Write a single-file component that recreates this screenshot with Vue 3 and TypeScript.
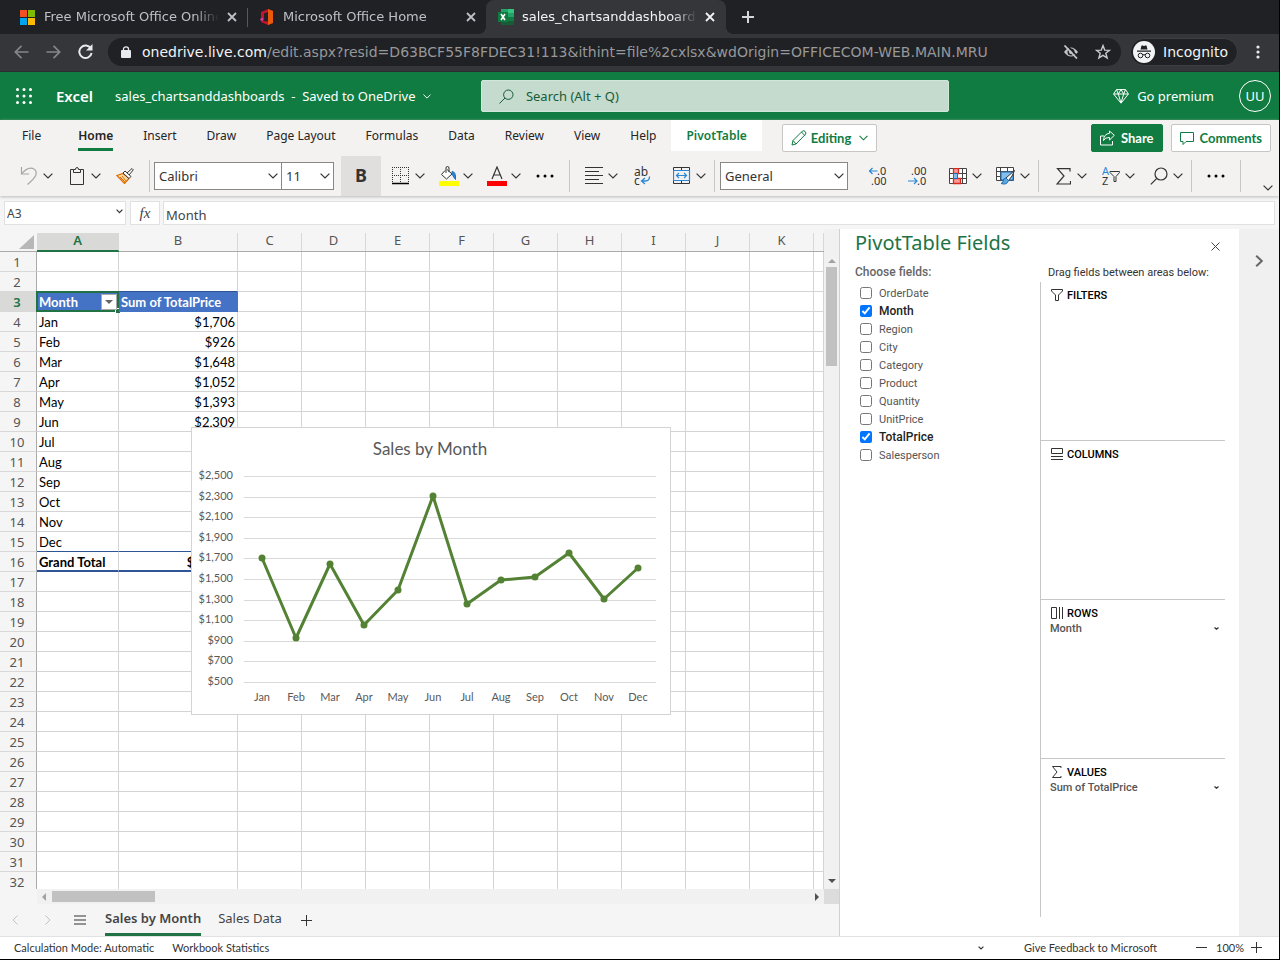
<script setup lang="ts">
import { computed, ref } from 'vue'

interface Field { name: string; on: boolean }
interface Area { id: string; title: string; item?: string }

const ribbonTabs: string[] = ['File', 'Home', 'Insert', 'Draw', 'Page Layout', 'Formulas', 'Data', 'Review', 'View', 'Help', 'PivotTable']
const cols: string[] = ['A', 'B', 'C', 'D', 'E', 'F', 'G', 'H', 'I', 'J', 'K', '']
const emptyCols = cols.slice(2)
const months = ['Jan', 'Feb', 'Mar', 'Apr', 'May', 'Jun', 'Jul', 'Aug', 'Sep', 'Oct', 'Nov', 'Dec']
const sales = [1706, 926, 1648, 1052, 1393, 2309, 1255, 1490, 1520, 1750, 1305, 1605]
const ticks = [2500, 2300, 2100, 1900, 1700, 1500, 1300, 1100, 900, 700, 500]

const money = (n: number): string => '$' + n.toLocaleString('en-US')

const rows = Array.from({ length: 32 }, (_, i) => {
  const n = i + 1
  if (n === 3) return { n, a: 'Month', b: 'Sum of TotalPrice' }
  if (n >= 4 && n <= 15) return { n, a: months[n - 4], b: n <= 9 ? money(sales[n - 4]) : '' }
  if (n === 16) return { n, a: 'Grand Total', b: '$17,959' }
  return { n, a: '', b: '' }
})

const fields = ref<Field[]>([
  { name: 'OrderDate', on: false },
  { name: 'Month', on: true },
  { name: 'Region', on: false },
  { name: 'City', on: false },
  { name: 'Category', on: false },
  { name: 'Product', on: false },
  { name: 'Quantity', on: false },
  { name: 'UnitPrice', on: false },
  { name: 'TotalPrice', on: true },
  { name: 'Salesperson', on: false },
])

const areas: Area[] = [
  { id: 'filters', title: 'FILTERS' },
  { id: 'columns', title: 'COLUMNS' },
  { id: 'rows', title: 'ROWS', item: 'Month' },
  { id: 'values', title: 'VALUES', item: 'Sum of TotalPrice' },
]

const search = ref('')
const formula = ref('Month')
const cellName = ref('A3')

const yOf = (v: number): number => Math.round(254 - ((v - 500) / 2000) * 206)
const xOf = (i: number): number => Math.round(69.500 + i * 34.2)
const line = computed(() => sales.map((v, i) => `${xOf(i)},${yOf(v)}`).join(' '))
</script>

<template>
  <div class="window">
    <svg class="defs" aria-hidden="true">
      <symbol id="chev" viewBox="0 0 10 6"><path d="M.6.6 5 5 9.400.6" fill="none" stroke="currentColor" stroke-width="1.2" /></symbol>
      <symbol id="close" viewBox="0 0 10 10"><path d="M1 1l8 8M9 1l-8 8" fill="none" stroke="currentColor" stroke-width="1.8" /></symbol>
      <symbol id="dots" viewBox="0 0 18 4"><circle cx="2" cy="2" r="1.5" /><circle cx="9" cy="2" r="1.5" /><circle cx="16" cy="2" r="1.5" /></symbol>
    </svg>

    <header class="browser">
      <nav class="btabs">
        <div class="btab first">
          <svg width="15" height="15" viewBox="0 0 15 15"><path fill="#f25022" d="M0 0h7v7H0z" /><path fill="#7fba00" d="M8 0h7v7H8z" /><path fill="#00a4ef" d="M0 8h7v7H0z" /><path fill="#ffb900" d="M8 8h7v7H8z" /></svg>
          <span class="btitle">Free Microsoft Office Online</span>
          <button class="bx" aria-label="Close tab"><svg width="10" height="10"><use href="#close" /></svg></button>
        </div>
        <div class="btab second">
          <svg width="14" height="16" viewBox="0 0 14 16"><path fill="#c4122f" d="M8 0 1 3v10l7 3 5-2V2z" /><path fill="#d83ba0" d="M1 9 0 11l3 1V9z" /><path fill="#e8590c" d="M8 0v16l5-2V2z" /><path fill="#202124" d="M4 4.500 8 3v9.500L3 12l1-1z" /></svg>
          <span class="btitle">Microsoft Office Home</span>
          <button class="bx" aria-label="Close tab"><svg width="10" height="10"><use href="#close" /></svg></button>
        </div>
        <div class="btab third">
          <svg width="16" height="16" viewBox="0 0 16 16"><path fill="#21a366" d="M3 0h7v4H3z" /><path fill="#33c481" d="M10 0h6v4h-6z" /><path fill="#107c41" d="M3 4h7v4H3z" /><path fill="#21a366" d="M10 4h6v4h-6z" /><path fill="#185c37" d="M3 8h13v8H3z" /><path fill="#107c41" d="M10 8h6v4h-6z" /><path fill="#0f7a40" d="M0 3h10v10H0z" /><path d="M3 5l4 6M7 5l-4 6" stroke="#fff" stroke-width="1.600" /></svg>
          <span class="btitle">sales_chartsanddashboards</span>
          <button class="bx" aria-label="Close tab"><svg width="10" height="10"><use href="#close" /></svg></button>
        </div>
        <button class="newtab" aria-label="New tab"><svg width="12" height="12" viewBox="0 0 12 12"><path d="M6 0v12M0 6h12" stroke="#d5d6d8" stroke-width="2" /></svg></button>
      </nav>
      <div class="bbar">
        <button class="bnav dim" aria-label="Back"><svg width="15" height="14" viewBox="0 0 15 14"><path d="M14.500 7H1.500M7.500.800 1.300 7l6.200 6.200" fill="none" stroke="currentColor" stroke-width="1.700" /></svg></button>
        <button class="bnav dim" aria-label="Forward"><svg width="15" height="14" viewBox="0 0 15 14"><path d="M.500 7h13M7.500.800 13.700 7l-6.200 6.200" fill="none" stroke="currentColor" stroke-width="1.700" /></svg></button>
        <button class="bnav" aria-label="Reload"><svg width="15" height="15" viewBox="0 0 15 15"><path d="M12.800 4.500A6.200 6.200 0 1 0 13.600 9" fill="none" stroke="currentColor" stroke-width="2" /><path d="M14.500 0v6.500H8z" fill="currentColor" /></svg></button>
        <div class="address">
          <svg width="10" height="12" viewBox="0 0 10 12"><path fill="#e8eaed" d="M1 4h8q1 0 1 1v6q0 1-1 1H1q-1 0-1-1V5q0-1 1-1z" /><path d="M2.500 5V3a2.500 2.200 0 0 1 5 0v2" fill="none" stroke="#e8eaed" stroke-width="1.300" /></svg>
          <span class="url"><b>onedrive.live.com</b>/edit.aspx?resid=D63BCF55F8FDEC31!113&amp;ithint=file%2cxlsx&amp;wdOrigin=OFFICECOM-WEB.MAIN.MRU</span>
          <svg width="16" height="14" viewBox="0 0 16 14"><path d="M1 7q7-9 14 0-7 9-14 0z" fill="#c4c5c8" /><circle cx="8" cy="7" r="3.500" fill="#202124" /><circle cx="8" cy="7" r="2" fill="#c4c5c8" /><path d="M3.500 0l12 12.500" stroke="#202124" stroke-width="1.800" /><path d="M1.500.500l12.500 13" stroke="#c4c5c8" stroke-width="1.800" /></svg>
          <svg class="star" width="16" height="16" viewBox="0 0 16 16"><path d="M8 1.600l1.700 4.500 4.800.2-3.700 3 1.300 4.600L8 11.300l-4.100 2.600 1.300-4.600-3.700-3 4.800-.2z" fill="none" stroke="#c9cacc" stroke-width="1.400" /></svg>
        </div>
        <div class="incog">
          <svg width="22" height="22" viewBox="0 0 22 22"><circle cx="11" cy="11" r="11" fill="#f1f3f4" /><path d="M7.500 8.500 8.500 4.500h1.200q1.300.8 2.600 0h1.200l1 4zM4 9.500h14v1.300H4z" fill="#202124" /><circle cx="7.500" cy="14.500" r="2.300" fill="none" stroke="#202124" /><circle cx="14.500" cy="14.500" r="2.300" fill="none" stroke="#202124" /><path d="M9.800 14q1.200-.8 2.400 0" stroke="#202124" fill="none" /></svg>
          <span>Incognito</span>
        </div>
        <button class="kebab" aria-label="Menu"><svg width="4" height="14" viewBox="0 0 4 14" fill="#e8eaed"><circle cx="2" cy="2" r="1.600" /><circle cx="2" cy="7" r="1.600" /><circle cx="2" cy="12" r="1.600" /></svg></button>
      </div>
    </header>

    <div class="suite">
      <button class="waffle" aria-label="App launcher">
        <svg width="16" height="16" viewBox="0 0 16 16" fill="#fff"><template v-for="r in 3" :key="r"><circle v-for="c in 3" :key="c" :cx="c * 6.500 - 5" :cy="r * 6.500 - 5" r="1.500" /></template></svg>
      </button>
      <strong class="brand">Excel</strong>
      <button class="docname">sales_chartsanddashboards&nbsp; - &nbsp;Saved to OneDrive <svg width="8" height="5"><use href="#chev" /></svg></button>
      <label class="search">
        <svg width="15" height="15" viewBox="0 0 15 15"><circle cx="9.300" cy="5.700" r="4.700" fill="none" stroke="#185c37" /><path d="M6 9 .500 14.500" stroke="#185c37" /></svg>
        <input v-model="search" type="text" placeholder="Search (Alt + Q)" aria-label="Search" />
      </label>
      <button class="premium">
        <svg width="16" height="15" viewBox="0 0 16 15" fill="none" stroke="#fff"><path d="M3.500.600h9L15.400 5 8 14.200.600 5zM.600 5h14.800M5.300 5 8 14l2.700-9M3.500.600 5.300 5 8 .600 10.700 5l1.800-4.400" /></svg>
        Go premium
      </button>
      <button class="avatar" aria-label="Account">UU</button>
    </div>

    <section class="ribbon">
      <div class="rtabs">
        <button v-for="t in ribbonTabs" :key="t" class="rtab" :class="[t === 'Home' && 'on', t === 'PivotTable' && 'ctx', t === 'File' && 'file']"><span>{{ t }}</span></button>
        <button class="rbtn editing">
          <svg width="16" height="16" viewBox="0 0 16 16" fill="none" stroke="currentColor"><path d="M1 15l1-4.500L11.500 1q1.500-.8 2.700.6t.3 2.700L5 14zM2 10.500 5 14M10.500 2l3.300 3.500" /></svg>
          Editing
          <svg class="tail" width="9" height="6"><use href="#chev" /></svg>
        </button>
        <button class="rbtn share">
          <svg width="15" height="16" viewBox="0 0 15 16" fill="none" stroke="currentColor"><path d="M4 6H.500v9h12v-4M9.500 1l4.800 4.300L9.500 10V7.500Q5 7.200 3.500 10.500 4 3.800 9.500 3.300z" /></svg>
          Share
        </button>
        <button class="rbtn comments">
          <svg width="14" height="13" viewBox="0 0 14 13" fill="none" stroke="currentColor"><path d="M.500.500h13v9H6L3 12.500v-3H.500z" /></svg>
          Comments
        </button>
      </div>

      <div class="tools">
        <button class="split pale" aria-label="Undo">
          <span class="ic"><svg width="18" height="18" viewBox="0 0 18 18" fill="none" stroke="#a8a6a4" stroke-width="1.200"><path d="M1.500 0v7H9M1.500 7Q7 0 12.500 1.300q5 2 3.200 7.200Q14 12 7.500 17.500" /></svg></span><svg class="cv"><use href="#chev" /></svg>
        </button>
        <button class="split" aria-label="Paste">
          <span class="ic"><svg width="14" height="18" viewBox="0 0 14 18" fill="none" stroke="#333"><path d="M3.500 2.500H.500v15h13v-15h-3" /><path d="M3.500 2.500h2Q5.500.500 7 .500t1.500 2h2v3h-7z" /></svg></span><svg class="cv"><use href="#chev" /></svg>
        </button>
        <button class="solo" aria-label="Format painter">
          <svg width="18" height="16" viewBox="0 0 18 16"><path d="M.800 7.500 7 5.500l6 5-4.500 5z" fill="#fbd9a5" stroke="#e06c00" stroke-width="1.200" /><path d="M4 9l5 5M6 8l4 5" stroke="#e06c00" /><path d="M7 5l2-2 6 5.500-2 2zM11 5l5-4.500 1.300 1.300L13 7" fill="#fff" stroke="#333" /></svg>
        </button>
        <i class="sep"></i>
        <label class="combo font"><select aria-label="Font"><option>Calibri</option></select><svg class="cv"><use href="#chev" /></svg></label>
        <label class="combo size"><select aria-label="Font size"><option>11</option></select><svg class="cv"><use href="#chev" /></svg></label>
        <button class="bold" aria-label="Bold">B</button>
        <button class="split" aria-label="Borders">
          <span class="ic"><svg width="18" height="18" viewBox="0 0 18 18" stroke="#333"><path d="M.500 0v16M16.500 0v16M8.500 0v16M0 .500h17M0 8.500h17" stroke-dasharray="1 1" /><path d="M0 16.500h17" stroke="#000" stroke-width="1.500" /></svg></span><svg class="cv"><use href="#chev" /></svg>
        </button>
        <button class="split" aria-label="Fill color">
          <span class="ic"><svg width="20" height="20" viewBox="0 0 20 20"><path d="M6 4.500 2.500 8.500l5 4.500L13 8 8 3.500" fill="#fff" stroke="#333" /><path d="M7 7V2q0-1.500 1.500-1.500T10 2v4" fill="none" stroke="#333" /><path d="M13 5.500q4 0 3.500 8Q15 12 13 8z" fill="#2b88d8" stroke="#1f6fb8" /><path fill="#ff0" d="M0 15h20v5H0z" /></svg></span><svg class="cv"><use href="#chev" /></svg>
        </button>
        <button class="split" aria-label="Font color">
          <span class="ic"><svg width="20" height="20" viewBox="0 0 20 20"><path d="M5 13 10 1l5 12M7 9h6.500" fill="none" stroke="#333" stroke-width="1.200" /><path fill="#f00" d="M0 15h20v5H0z" /></svg></span><svg class="cv"><use href="#chev" /></svg>
        </button>
        <button class="solo" aria-label="More font options"><svg width="18" height="4"><use href="#dots" /></svg></button>
        <i class="sep"></i>
        <button class="split" aria-label="Alignment">
          <span class="ic"><svg width="18" height="18" viewBox="0 0 18 18" stroke="#333"><path d="M0 .500h18M0 4.500h14M0 8.500h18M0 12.500h14M0 16.500h18" /></svg></span><svg class="cv"><use href="#chev" /></svg>
        </button>
        <button class="solo wrap" aria-label="Wrap text">
          <svg width="18" height="24" viewBox="0 0 18 24"><text x="1" y="12" font-size="12" fill="#333">ab</text><text x="1" y="21" font-size="12" fill="#333">c</text><path d="M16.500 12.500q0 4.500-4 4.500H9M12 14l-3.500 3 3.500 3" fill="none" stroke="#2b88d8" stroke-width="1.300" /></svg>
        </button>
        <button class="split" aria-label="Merge">
          <span class="ic"><svg width="18" height="18" viewBox="0 0 18 18" fill="none"><path d="M.500 4V.500h16V4M.500 13v3.500h16V13M8.500.500V4M8.500 13v3.500" stroke="#333" /><path d="M.500 3.500h16v10H.500z" stroke="#2b88d8" stroke-width="1.200" /><path d="M3.500 8.500h10M6 6 3.500 8.500 6 11M11 6l2.500 2.500L11 11" stroke="#2b88d8" stroke-width="1.200" /></svg></span><svg class="cv"><use href="#chev" /></svg>
        </button>
        <i class="sep"></i>
        <label class="combo number"><select aria-label="Number format"><option>General</option></select><svg class="cv"><use href="#chev" /></svg></label>
        <button class="solo dec" aria-label="Increase decimal">
          <svg width="20" height="24" viewBox="0 0 20 24"><text x="9" y="11" font-size="11" fill="#333">.0</text><text x="3" y="21" font-size="11" fill="#333">.00</text><path d="M9.500 7H1.500M4.500 4l-3 3 3 3" fill="none" stroke="#2b88d8" stroke-width="1.200" /></svg>
        </button>
        <button class="solo" aria-label="Decrease decimal">
          <svg width="20" height="24" viewBox="0 0 20 24"><text x="3" y="11" font-size="11" fill="#333">.00</text><text x="9" y="21" font-size="11" fill="#333">.0</text><path d="M0 17h9M6 14l3 3-3 3" fill="none" stroke="#2b88d8" stroke-width="1.200" /></svg>
        </button>
        <button class="split" aria-label="Conditional formatting">
          <span class="ic"><svg width="18" height="17" viewBox="0 0 18 17"><path d="M.500.500h17v15H.500zM13.500 0v16M0 5.500h18M0 10.500h18M4.500 0v16" fill="#fff" stroke="#444" /><path d="M4.500.500h5v5h-5zM4.500 10.500h7v5h-7z" fill="#ff9a9a" stroke="#d62b20" stroke-width="1.300" /><path d="M4.500 5.500h4v5h-4z" fill="#83beec" stroke="#1f6fb8" /></svg></span><svg class="cv"><use href="#chev" /></svg>
        </button>
        <button class="split" aria-label="Format as table">
          <span class="ic"><svg width="20" height="18" viewBox="0 0 20 18"><path d="M.500.500h17v13H.500zM0 4.500h18M4.500 0v14M0 9.500h5M11.500 0v4" fill="#fff" stroke="#444" /><path d="M5 5h12v8H5z" fill="#83beec" stroke="#1f6fb8" /><path d="M18.500 3.500 10 11l2.500 2.500q4-4 6-10z" fill="#fff" stroke="#333" /><path d="M10 11q-3 0-3 4l-2 1.500q6 2 7.500-3z" fill="#5ba8e0" stroke="#1f6fb8" /></svg></span><svg class="cv"><use href="#chev" /></svg>
        </button>
        <i class="sep"></i>
        <button class="split" aria-label="AutoSum">
          <span class="ic"><svg width="15" height="17" viewBox="0 0 15 17"><path d="M14 3.500V.600H1.500L8 8l-7 8h13.500v-3" fill="none" stroke="#333" stroke-width="1.200" /></svg></span><svg class="cv"><use href="#chev" /></svg>
        </button>
        <button class="split" aria-label="Sort and filter">
          <span class="ic"><svg width="18" height="24" viewBox="0 0 18 24"><text x="0" y="11" font-size="11" fill="#2b88d8">A</text><text x="0" y="21" font-size="11" fill="#333">Z</text><path d="M8 7.500h9.500v1L14 12.500v5h-2v-5L8 8.500z" fill="none" stroke="#333" /></svg></span><svg class="cv"><use href="#chev" /></svg>
        </button>
        <button class="split" aria-label="Find">
          <span class="ic"><svg width="18" height="18" viewBox="0 0 18 18"><circle cx="11" cy="7" r="6" fill="none" stroke="#333" stroke-width="1.200" /><path d="M6.800 11.300.800 17.300" stroke="#333" stroke-width="1.200" /></svg></span><svg class="cv"><use href="#chev" /></svg>
        </button>
        <i class="sep"></i>
        <button class="solo" aria-label="More"><svg width="18" height="4"><use href="#dots" /></svg></button>
        <i class="sep"></i>
        <button class="collapse" aria-label="Collapse ribbon"><svg class="cv"><use href="#chev" /></svg></button>
      </div>
    </section>

    <div class="fbar">
      <label class="namebox"><input v-model="cellName" type="text" aria-label="Name box" /><svg width="7" height="5" viewBox="0 0 7 5"><path d="M.600.600 3.500 3.600 6.400.600" fill="none" stroke="#333" stroke-width="1.200" /></svg></label>
      <button class="fx" aria-label="Insert function">fx</button>
      <input v-model="formula" class="formula" type="text" aria-label="Formula bar" />
    </div>

    <main class="work">
      <section class="book">
        <div class="sheetrow">
          <div class="sheet">
            <table>
              <colgroup><col class="c-row" /><col class="c-a" /><col class="c-b" /><col v-for="i in 9" :key="i" class="c-n" /><col /></colgroup>
              <thead>
                <tr>
                  <td class="corner"><svg width="15" height="14" viewBox="0 0 15 14"><path d="M15 0v14H0z" fill="#b7b7b7" /></svg></td>
                  <th v-for="(c, i) in cols" :key="i" scope="col" :class="{ sel: c === 'A' }"><span>{{ c }}</span></th>
                </tr>
              </thead>
              <tbody>
                <tr v-for="r in rows" :key="r.n" :class="'r' + r.n">
                  <th scope="row">{{ r.n }}</th>
                  <td>{{ r.a }}<template v-if="r.n === 3"><i class="cursor"></i><button class="drop" aria-label="Filter Month"><svg width="8" height="4" viewBox="0 0 8 4"><path d="M0 0h8L4 4z" fill="#666" /></svg></button></template></td>
                  <td class="num">{{ r.b }}</td>
                  <td v-for="(c, i) in emptyCols" :key="i"></td>
                </tr>
              </tbody>
            </table>
            <figure class="chart">
              <svg viewBox="0 0 478 286" width="478" height="286" role="img" aria-label="Sales by Month">
                <text class="ctitle" x="238" y="27">Sales by Month</text>
                <g v-for="t in ticks" :key="t">
                  <path :d="`M52 ${yOf(t)}.5H464`" stroke="#d9d9d9" />
                  <text class="ytick" x="41" :y="yOf(t) + 3">{{ money(t) }}</text>
                </g>
                <text v-for="(m, i) in months" :key="m" class="xtick" :x="xOf(i)" y="273">{{ m }}</text>
                <polyline :points="line" fill="none" stroke="#548235" stroke-width="3" stroke-linejoin="round" />
                <circle v-for="(v, i) in sales" :key="i" :cx="xOf(i)" :cy="yOf(v)" r="3.500" fill="#548235" />
              </svg>
            </figure>
          </div>
          <div class="vscroll">
            <svg class="arrow" width="8" height="4" viewBox="0 0 8 4"><path d="M0 4h8L4 0z" fill="#a3a3a3" /></svg>
            <i class="vthumb"></i>
            <svg class="arrow end" width="8" height="4" viewBox="0 0 8 4"><path d="M0 0h8L4 4z" fill="#505050" /></svg>
          </div>
        </div>
        <div class="hscroll">
          <div class="track">
            <svg width="4" height="8" viewBox="0 0 4 8"><path d="M4 0v8L0 4z" fill="#a3a3a3" /></svg>
            <i class="hthumb"></i>
            <svg class="end" width="4" height="8" viewBox="0 0 4 8"><path d="M0 0v8l4-4z" fill="#505050" /></svg>
          </div>
          <i class="sizer"></i>
        </div>
        <nav class="stabs">
          <button class="snav" aria-label="Previous sheet"><svg width="6" height="10" viewBox="0 0 6 10"><path d="M5.500.500 1 5l4.500 4.500" fill="none" stroke="#c0c0c0" /></svg></button>
          <button class="snav" aria-label="Next sheet"><svg width="6" height="10" viewBox="0 0 6 10"><path d="M.500.500 5 5 .500 9.500" fill="none" stroke="#c0c0c0" /></svg></button>
          <button class="snav" aria-label="All sheets"><svg width="12" height="10" viewBox="0 0 12 10"><path d="M0 1h12M0 5h12M0 9h12" stroke="#333" stroke-width="1.200" /></svg></button>
          <button class="stab on">Sales by Month</button>
          <button class="stab">Sales Data</button>
          <button class="sadd" aria-label="Add sheet"><svg width="11" height="11" viewBox="0 0 11 11"><path d="M5.500 0v11M0 5.500h11" stroke="#333" /></svg></button>
        </nav>
      </section>

      <aside class="pane">
        <div class="phead">
          <h2>PivotTable Fields</h2>
          <button class="pclose" aria-label="Close"><svg width="9" height="9" viewBox="0 0 9 9"><path d="M.500.500l8 8M8.500.500l-8 8" stroke="#444" /></svg></button>
        </div>
        <div class="pbody">
          <div class="choose">
            <h3>Choose fields:</h3>
            <label v-for="f in fields" :key="f.name" :class="{ on: f.on }"><input v-model="f.on" type="checkbox" />{{ f.name }}</label>
          </div>
          <div class="zones">
            <p>Drag fields between areas below:</p>
            <div class="zlist">
              <section v-for="a in areas" :key="a.id" class="zone">
                <h4>
                  <svg v-if="a.id === 'filters'" width="12" height="12" viewBox="0 0 12 12" fill="none" stroke="#333"><path d="M.500.500h11v1.500L7.500 6v5.500h-3V6l-4-4z" /></svg>
                  <svg v-else-if="a.id === 'columns'" width="12" height="12" viewBox="0 0 12 12" fill="none" stroke="#333"><path d="M.500.500h11v5H.500zM0 8.500h12M0 11.500h12" /></svg>
                  <svg v-else-if="a.id === 'rows'" width="12" height="12" viewBox="0 0 12 12" fill="none" stroke="#333"><path d="M.500.500h5v11h-5zM8.500 0v12M11.500 0v12" /></svg>
                  <svg v-else width="12" height="12" viewBox="0 0 12 12" fill="none" stroke="#333"><path d="M10 2V.500H1.500L6 6l-4.500 5.500H10V10" /></svg>
                  {{ a.title }}
                </h4>
                <button v-if="a.item" class="zitem">{{ a.item }}<svg width="5" height="3" viewBox="0 0 5 3"><path d="M.500.500 2.500 2.200 4.500.500" fill="none" stroke="#333" stroke-width="1.300" /></svg></button>
              </section>
            </div>
          </div>
        </div>
      </aside>
      <div class="strip"><button aria-label="Expand"><svg width="8" height="12" viewBox="0 0 8 12"><path d="M1.200.800 6.800 6l-5.600 5.200" fill="none" stroke="#666" stroke-width="2" /></svg></button></div>
    </main>

    <footer class="status">
      <span>Calculation Mode: Automatic</span>
      <span>Workbook Statistics</span>
      <button class="stmore" aria-label="Status options"><svg width="6" height="4" viewBox="0 0 6 4"><path d="M.600.600 3 3 5.400.600" fill="none" stroke="#333" stroke-width="1.200" /></svg></button>
      <a href="#feedback">Give Feedback to Microsoft</a>
      <button class="zoomb" aria-label="Zoom out"><svg width="11" height="11" viewBox="0 0 11 11"><path d="M0 5.500h11" stroke="#333" /></svg></button>
      <span class="pct">100%</span>
      <button class="zoomb" aria-label="Zoom in"><svg width="11" height="11" viewBox="0 0 11 11"><path d="M5.500 0v11M0 5.500h11" stroke="#333" /></svg></button>
    </footer>
  </div>
</template>

<style>
body { margin: 0; background: #000; }
</style>

<style scoped>
* { box-sizing: border-box; }
button { border: 0; background: none; padding: 0; margin: 0; font: inherit; color: inherit; display: flex; align-items: center; }
svg { display: block; flex: none; }
input, select { font: inherit; color: inherit; min-width: 0; }
.defs { position: absolute; width: 0; height: 0; }
.cv { width: 10px; height: 6px; color: #333; }

.window { display: flex; flex-direction: column; height: 100vh; border: solid #000; border-width: 0 1px 1px 0; font-family: "Noto Sans", sans-serif; font-size: 13px; color: #333; background: #f5f5f5; overflow: hidden; }

.browser { font-family: "DejaVu Sans", sans-serif; background: #202124; color: #bdc1c6; }
.btabs { display: flex; height: 34px; }
.btab { display: flex; align-items: center; padding: 0 10px 0 20px; width: 247px; font-size: 13px; position: relative; }
.btitle { flex: 1; min-width: 0; white-space: nowrap; overflow: hidden; margin: 0 8px 0 9px; line-height: 20px; mask-image: linear-gradient(to right, #000 calc(100% - 24px), transparent); }
.second { width: 240px; padding-left: 13px; padding-right: 11px; }
.second::before { content: ""; position: absolute; left: 0; top: 8px; height: 19px; width: 1px; background: #55575b; }
.third { width: 240px; padding-left: 12px; padding-right: 11px; background: #35363a; color: #f1f3f4; border-radius: 8px 8px 0 0; margin-left: -1px; }
.third .btitle { margin-left: 8px; }
.third::before, .third::after { content: ""; position: absolute; bottom: 0; width: 8px; height: 8px; }
.third::before { left: -8px; background: radial-gradient(circle at 0 0, transparent 8px, #35363a 8px); }
.third::after { right: -8px; background: radial-gradient(circle at 100% 0, transparent 8px, #35363a 8px); }
.newtab { margin-left: 16px; }
.bbar { display: flex; align-items: center; height: 38px; background: #35363a; border-bottom: 1px solid #2b2c2f; padding: 0 19px 2px 14px; }
.bnav { width: 15px; margin-right: 17px; color: #e8eaed; }
.dim { color: #84868a; }
.address { flex: 1; display: flex; align-items: center; height: 28px; background: #202124; border-radius: 14px; margin-left: -2px; padding: 0 10px 0 13px; min-width: 0; }
.url { flex: 1; margin-left: 11px; font-size: 14px; color: #96989b; white-space: nowrap; overflow: hidden; }
.url b { font-weight: 400; color: #f1f3f4; }
.star { margin-left: 16px; }
.incog { display: flex; align-items: center; gap: 8px; height: 28px; margin-left: 9px; padding: 0 9px 0 2px; border: 1px solid #3d3e42; border-radius: 14px; background: #202124; color: #f1f3f4; font-size: 14px; }
.kebab { margin-left: 18px; }

.suite { display: flex; align-items: center; height: 48px; background: #107c41; color: #fff; padding: 0 8px 0 16px; }
.brand { margin-left: 24px; font-size: 15px; font-weight: 600; }
.docname { margin-left: 22px; white-space: pre; gap: 4px; }
.search { display: flex; align-items: center; width: 468px; height: 32px; margin-left: 50px; padding: 0 17px; gap: 12px; background: #c5dbce; border: 1px solid #d3e6da; border-radius: 2px; color: #185c37; }
.search input { flex: 1; border: 0; background: none; outline: 0; padding: 0; }
.search input::placeholder { color: #185c37; opacity: 1; }
.premium { margin-left: auto; gap: 8px; }
.avatar { width: 32px; height: 32px; margin-left: 25px; border: 1px solid #fff; border-radius: 50%; justify-content: center; }

.ribbon { background: #f3f2f1; height: 76px; box-shadow: 0 1px 3px #bbb; position: relative; }
.rtabs { display: flex; height: 36px; font-size: 12px; color: #252423; padding: 0 8px 0 7px; }
.rtab { height: 31px; padding: 0 15px; }
.rtab span { height: 31px; line-height: 32px; border-bottom: 3px solid transparent; }
.file { margin-right: 7px; }
.rtab.on { font-weight: 600; }
.rtab.on span { border-color: #107c41; }
.ctx { background: #fff; color: #107c41; font-weight: 600; }
.rbtn { height: 28px; margin-top: 4px; font-family: Lato, sans-serif; font-size: 13px; font-weight: 700; border: 1px solid #c8c6c4; border-radius: 2px; background: #fff; color: #107c41; padding: 0 8px; gap: 4px; }
.editing { margin-left: 20px; }
.tail { margin-left: 4px; }
.share { margin-left: auto; background: #107c41; color: #fff; border-color: #107c41; gap: 6px; }
.comments { margin-left: 8px; gap: 6px; }
.tools { display: flex; align-items: center; height: 40px; padding-left: 9px; }
.split { margin-left: 10px; width: 38px; height: 36px; gap: 5px; }
.ic { width: 20px; display: flex; justify-content: center; }
.split .cv { margin-left: -1px; }
.solo { width: 40px; height: 36px; justify-content: center; }
.sep { width: 1px; height: 32px; background: #c8c6c4; margin: 0 4px; }
.combo { display: flex; align-items: center; position: relative; height: 28px; border: 1px solid #8a8886; background: #fff; font-size: 13px; }
.combo select { appearance: none; border: 0; background: none; width: 100%; height: 100%; padding: 0 4px; outline: 0; }
.combo .cv { position: absolute; right: 3px; pointer-events: none; }
.font { width: 128px; }
.size { width: 52px; border-left: 0; }
.number { width: 128px; margin-left: 1px; }
.bold { width: 40px; height: 40px; margin-left: 7px; padding-bottom: 2px; justify-content: center; background: #e1dfdd; font-size: 18px; font-weight: 700; }
.dec { margin-left: 10px; }
.collapse { margin: 24px 6px 0 auto; }

.fbar { display: flex; align-items: stretch; height: 24px; margin: 5px 4px 4px; gap: 4px; color: #444; }
.namebox { display: flex; align-items: center; width: 122px; border: 1px solid #e1e1e1; background: #fff; padding-right: 2px; }
.namebox input { flex: 1; border: 0; outline: 0; padding: 0 2px; background: none; font-size: 12px; }
.namebox svg { margin-bottom: 3px; }
.fx { width: 30px; justify-content: center; border: 1px solid #e1e1e1; background: #fff; font: italic 15px "Liberation Serif", serif; }
.formula { flex: 1; border: 1px solid #e1e1e1; background: #fff; outline: 0; padding: 4px 2px 0; margin-left: -1px; }

.work { flex: 1; min-height: 0; display: flex; }
.book { flex: 1; min-width: 0; display: flex; flex-direction: column; }
.sheetrow { flex: 1; min-height: 0; display: flex; }
.sheet { flex: 1; min-width: 0; overflow: hidden; position: relative; background: #fff; }
table { table-layout: fixed; width: 100%; border-collapse: separate; border-spacing: 0; font-family: Lato, sans-serif; font-size: 13px; color: #000; }
.c-row { width: 37px; }
.c-a { width: 82px; }
.c-b { width: 119px; }
.c-n { width: 64px; }
thead th, .corner { height: 23px; padding: 4px 0 0; background: #f5f5f5; border-bottom: 1px solid #ababab; }
thead th { font: 400 13px "Noto Sans", sans-serif; color: #555; }
thead th span { display: block; height: 18px; line-height: 15px; border-right: 1px solid #d8d8d8; }
thead .sel span { background: #d9d9d7; color: #217346; font-weight: 600; border-bottom: 1px solid #217346; }
thead .sel { border-bottom-color: #217346; }
.corner svg { margin-left: 19px; }
tbody th { height: 20px; padding: 2px 2px 0 0; font: 400 13px/17px "Noto Sans", sans-serif; color: #555; background: #f5f5f5; border-right: 1px solid #ababab; border-bottom: 1px solid #d8d8d8; }
tbody td { height: 20px; line-height: 17px; padding: 2px 2px 0; border-right: 1px solid #d4d4d4; border-bottom: 1px solid #d4d4d4; white-space: nowrap; }
.num { text-align: right; }
.r3 th { background: #d9d9d7; color: #217346; font-weight: 600; }
.r3 td:nth-child(2), .r3 td:nth-child(3) { background: #4472c4; color: #fff; font-weight: 700; text-align: left; border-color: #4472c4; position: relative; }
.r2 td:nth-child(3) { border-bottom-color: #2f5597; }
.r15 td:nth-child(2), .r15 td:nth-child(3) { border-bottom-color: #2f5597; }
.r16 td:nth-child(2), .r16 td:nth-child(3) { border-bottom: 2px solid #2f5597; line-height: 16px; font-weight: 700; }
tbody .r16 td { vertical-align: top; }
.cursor { position: absolute; inset: -1px -1px -1px -1px; border: 2px solid #217346; pointer-events: none; }
.cursor::after { content: ""; position: absolute; right: -3px; bottom: -3px; width: 4px; height: 4px; background: #217346; border: solid #fff; border-width: 1px 0 0 1px; box-sizing: content-box; }
.drop { position: absolute; right: 1px; top: 2px; width: 16px; height: 16px; background: #fff; border: 1px solid #aaa; justify-content: center; }
.chart { position: absolute; left: 191px; top: 198px; margin: 0; background: #fff; border: 1px solid #d4d4d4; font-family: Lato, sans-serif; }
.chart text { fill: #595959; font-size: 11px; }
.chart .ctitle { font-size: 17px; text-anchor: middle; }
.ytick { text-anchor: end; }
.xtick { text-anchor: middle; }

.vscroll { width: 15px; background: #f1f1f1; padding: 30px 2px 6px; display: flex; flex-direction: column; }
.arrow { align-self: center; }
.vthumb { height: 99px; margin-top: 4px; background: #c1c1c1; }
.end.arrow { margin-top: auto; }
.hscroll { display: flex; height: 15px; padding-left: 37px; }
.track { flex: 1; display: flex; align-items: center; background: #f1f1f1; padding: 0 5px; }
.hthumb { width: 103px; height: 11px; margin-left: 6px; background: #c1c1c1; }
.track .end { margin-left: auto; }
.sizer { width: 15px; background: #dcdcdc; }
.stabs { display: flex; height: 32px; font-size: 13px; color: #444; padding-left: 12px; }
.snav { width: 33px; justify-content: flex-start; }
.snav:nth-child(3) { width: 31px; margin-left: -4px; }
.stab { border-bottom: 3px solid transparent; padding-bottom: 2px; margin-right: 17px; }
.stab.on { font-weight: 600; border-color: #217346; }
.sadd { margin-left: 2px; }

.pane { width: 400px; background: #fff; border-left: 1px solid #d0d0d0; padding: 0 14px 19px 15px; display: flex; flex-direction: column; }
.phead { display: flex; justify-content: space-between; height: 34px; }
h2 { margin: 0; font-size: 20px; line-height: 27px; font-weight: 400; color: #217346; }
.pclose { margin-right: 5px; }
.pbody { flex: 1; display: flex; font-family: Roboto, sans-serif; font-size: 11px; color: #555; min-height: 0; }
.choose { flex: 1; }
h3 { margin: 0 0 3px; font-size: 12px; line-height: 18px; font-weight: 500; color: #666; }
.choose label { display: flex; align-items: center; height: 18px; gap: 7px; padding-left: 5px; }
.choose input { width: 12px; height: 12px; margin: 0; }
.choose .on { font-weight: 500; color: #222; font-size: 12px; }
.zones { width: 185px; display: flex; flex-direction: column; }
.zones p { margin: 0; padding-left: 8px; line-height: 19px; color: #333; white-space: nowrap; }
.zlist { flex: 1; display: flex; flex-direction: column; border-left: 1px solid #c6c6c6; }
.zone { flex: 1; border-bottom: 1px solid #c6c6c6; padding-top: 5px; }
.zone:last-child { border: 0; }
h4 { display: flex; align-items: center; gap: 4px; margin: 0; padding-left: 10px; height: 16px; font-size: 11px; font-weight: 500; color: #000; }
.zitem { width: 100%; justify-content: space-between; padding: 0 6px 0 9px; line-height: 15px; font-weight: 500; }
.strip { width: 40px; background: #f0f0f0; padding: 26px 0 0 16px; }

.status { display: flex; align-items: center; height: 23px; background: #fff; border-top: 1px solid #e1e1e1; font-family: Lato, sans-serif; font-size: 11px; padding: 0 17px 1px 14px; }
.status span { margin-right: 18px; }
.stmore { margin-left: auto; margin-right: 40px; }
.status a { color: inherit; text-decoration: none; margin-right: 39px; }
.status .pct { margin: 0 7px 0 9px; }
</style>
